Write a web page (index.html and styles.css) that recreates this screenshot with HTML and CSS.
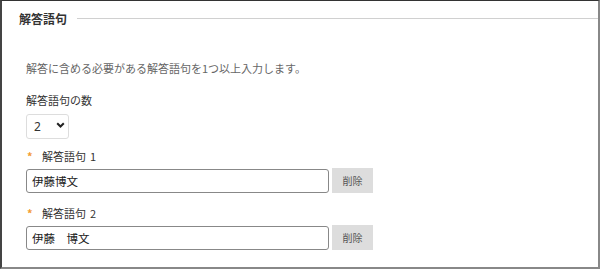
FILE: index.html
```html
<!doctype html>
<html>
<head>
	<meta charset="utf-8" />
	<title>解答語句</title>
	<link rel="stylesheet" href="styles.css">
</head>
<body>
	<div class="frame">
		<div class="section-head">
			<h2 class="section-title">解答語句</h2>
			<div class="section-rule"></div>
		</div>
		<p class="hint">解答に含める必要がある解答語句を1つ以上入力します。</p>

		<label class="field-label" for="count">解答語句の数</label>
		<div class="select-wrap">
			<select id="count" class="count-select">
				<option>1</option>
				<option selected>2</option>
				<option>3</option>
			</select>
			<svg class="chevron" width="9" height="6" viewBox="0 0 9 6"><path d="M1.2 1.2 L4.5 4.5 L7.8 1.2" fill="none" stroke="#222" stroke-width="2" /></svg>
		</div>

		<div class="phrase">
			<div class="phrase-label"><span class="req">*</span>解答語句<span class="num">1</span></div>
			<div class="phrase-row">
				<input class="phrase-input" type="text" value="伊藤博文" />
				<button class="del-btn">削除</button>
			</div>
		</div>
		<div class="phrase">
			<div class="phrase-label"><span class="req">*</span>解答語句<span class="num">2</span></div>
			<div class="phrase-row">
				<input class="phrase-input" type="text" value="伊藤　博文" />
				<button class="del-btn">削除</button>
			</div>
		</div>
	</div>
</body>
</html>
```

FILE: styles.css
```css
html, body { margin: 0; padding: 0; background: #fff; }
body { font-family: "Noto Sans CJK JP", "Noto Sans", sans-serif; color: #333; }

.frame { box-sizing: border-box; width: 600px; height: 269px; border-top: 1px solid #333; border-left: 2px solid #444; border-right: 2px solid #888; border-bottom: 2px solid #888; padding: 10px 0 0 24px; }

.section-head { display: flex; align-items: center; margin-left: -7px; }
.section-title { margin: 0; font-size: 12px; line-height: 16px; font-weight: bold; color: #333; }
.section-rule { flex: 1; height: 1px; background: #d0d0d0; margin-left: 10px; margin-top: -1px; }

.hint { margin: 33px 0 0; font-size: 11px; line-height: 16px; color: #666; }

.field-label { display: block; margin-top: 16px; font-size: 11px; line-height: 16px; color: #333; }

.select-wrap { position: relative; width: 43px; height: 25px; margin-top: 4px; }
.count-select { appearance: none; -webkit-appearance: none; box-sizing: border-box; width: 43px; height: 25px; border: 1px solid #ddd; border-radius: 3px; background: #fff; padding: 0 0 0 7px; font-family: "Noto Sans", sans-serif; font-size: 12px; color: #333; outline: none; }
.chevron { position: absolute; left: 30px; top: 10px; pointer-events: none; }

.phrase { margin-top: 11px; }
.phrase + .phrase { margin-top: 12px; }
.phrase-label { font-size: 11px; line-height: 16px; color: #333; }
.num { margin-left: 4px; }
.req { color: #f39c33; font-weight: bold; display: inline-block; width: 15px; padding-left: 1px; }

.phrase-row { display: flex; align-items: center; margin-top: 4px; }
.phrase-input { box-sizing: border-box; width: 303px; height: 24px; border: 1px solid #888; border-radius: 3px; padding: 0 5px; font-family: "Noto Sans CJK JP", sans-serif; font-size: 11.5px; color: #222; outline: none; }
.del-btn { box-sizing: border-box; width: 41px; height: 25px; margin-left: 3px; border: none; background: #ddd; color: #555; font-family: "Noto Sans CJK JP", sans-serif; font-size: 10px; padding: 0; }
```
